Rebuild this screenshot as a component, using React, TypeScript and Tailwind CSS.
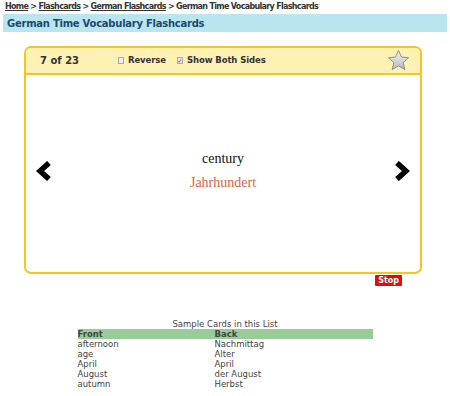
import React from "react"

const cards = [
  { front: "afternoon", back: "Nachmittag" },
  { front: "age", back: "Alter" },
  { front: "April", back: "April" },
  { front: "August", back: "der August" },
  { front: "autumn", back: "Herbst" },
]

function Star() {
  return (
    <svg width="23" height="23" viewBox="0 0 24 24">
      <defs>
        <linearGradient id="sg" x1="0" y1="0" x2="0" y2="1">
          <stop offset="0" stopColor="#f6f6f6" />
          <stop offset="1" stopColor="#b8b8b8" />
        </linearGradient>
      </defs>
      <path
        d="M12 1.5l3.1 6.9 7.4.7-5.6 5 1.7 7.4L12 17.6l-6.6 3.9 1.7-7.4-5.6-5 7.4-.7z"
        fill="url(#sg)"
        stroke="#8a8a8a"
        strokeWidth="1"
        strokeLinejoin="round"
      />
    </svg>
  )
}

function Chevron({ dir }: { dir: "left" | "right" }) {
  return (
    <svg width="16" height="20" viewBox="0 0 16 20">
      <path
        d={dir === "left" ? "M13 2L4 10L13 18" : "M3 2L12 10L3 18"}
        fill="none"
        stroke="#000"
        strokeWidth="5.5"
        strokeLinejoin="miter"
      />
    </svg>
  )
}

export default function App() {
  return (
    <div className="w-[450px] h-[396px] bg-white text-[#333] font-['DejaVu_Sans',sans-serif] overflow-hidden">
      {/* Breadcrumb */}
      <div className="px-[5px] pt-[2px] h-[12px] text-[8px] leading-[10px] font-bold tracking-[-0.68px] text-[#333] whitespace-nowrap">
        <a className="underline">Home</a> &gt; <a className="underline">Flashcards</a> &gt;{" "}
        <a className="underline">German Flashcards</a> &gt; German Time Vocabulary Flashcards
      </div>

      {/* Title bar */}
      <div className="mx-[3px] mt-[2px] h-[18px] bg-[#b9e5ee] px-[4px] flex items-center">
        <h1 className="text-[10px] font-bold tracking-[-0.25px] text-[#1d4a6e]">German Time Vocabulary Flashcards</h1>
      </div>

      {/* Flashcard */}
      <div className="ml-[24px] mt-[14px] w-[398px]">
        <div className="h-[228px] border-2 border-[#f2c528] rounded-[7px] flex flex-col overflow-hidden">
          <div className="h-[27px] bg-[#fdf1b4] border-b-2 border-[#f2c528] flex items-center pl-[14px] pr-[10px] shrink-0">
            <span className="w-[78px] text-[10px] font-bold text-[#333]">7 of 23</span>
            <label className="flex items-center gap-[4px] text-[8.5px] font-bold tracking-[-0.1px] text-[#333]">
              <span className="w-[6px] h-[7px] border border-[#aaa] bg-[#eee]" />
              Reverse
            </label>
            <label className="ml-[11px] flex items-center gap-[4px] text-[8.5px] font-bold tracking-[-0.1px] text-[#333]">
              <span className="w-[6px] h-[7px] border border-[#aaa] bg-[#eee] text-[6px] leading-[5px] flex items-center justify-center">✓</span>
              Show Both Sides
            </label>
            <div className="ml-auto">
              <Star />
            </div>
          </div>
          <div className="flex-1 flex items-center px-[10px] pb-[6px]">
            <Chevron dir="left" />
            <div className="flex-1 flex flex-col items-center font-['Liberation_Serif',serif]">
              <div className="text-[14px] leading-[18px] text-[#111]">century</div>
              <div className="mt-[6px] text-[14px] leading-[18px] text-[#e0603f]">Jahrhundert</div>
            </div>
            <Chevron dir="right" />
          </div>
        </div>
        <div className="flex justify-end pr-[20px] pt-[1px]">
          <button className="h-[11px] px-[3px] bg-[#e00d0d] text-white text-[8px] font-bold leading-[11px] rounded-[1px]">
            Stop
          </button>
        </div>
      </div>

      {/* Sample cards */}
      <div className="mt-[33px] flex flex-col items-center">
        <div className="text-[8.5px] leading-[10px] text-[#444]">Sample Cards in this List</div>
        <table className="w-[295px] text-[8.5px] text-[#444] border-collapse">
          <thead>
            <tr className="bg-[#99cc99]">
              <th className="text-left font-bold h-[10px] leading-[10px] w-[137px]">Front</th>
              <th className="text-left font-bold h-[10px] leading-[10px]">Back</th>
            </tr>
          </thead>
          <tbody>
            {cards.map((c) => (
              <tr key={c.front}>
                <td className="h-[10px] leading-[10px]">{c.front}</td>
                <td className="h-[10px] leading-[10px]">{c.back}</td>
              </tr>
            ))}
          </tbody>
        </table>
      </div>
    </div>
  )
}
